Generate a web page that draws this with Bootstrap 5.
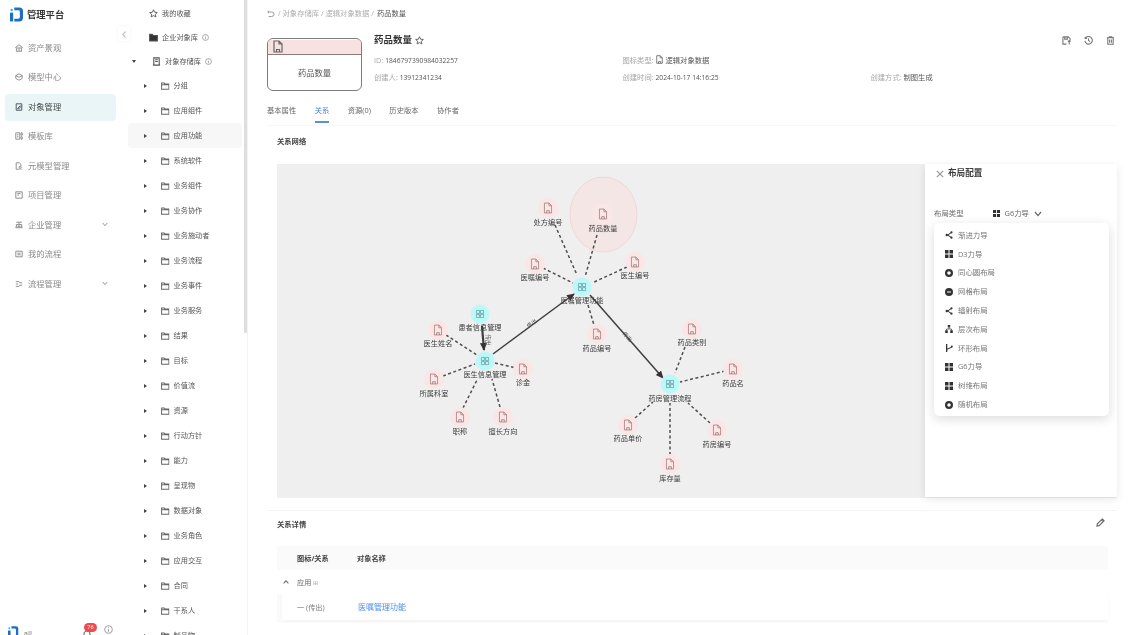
<!DOCTYPE html>
<html lang="zh-CN">
<head>
    <meta charset="UTF-8">
    <meta name="viewport" content="width=device-width, initial-scale=1.0">
    <link href="https://cdn.jsdelivr.net/npm/bootstrap@5.3.2/dist/css/bootstrap.min.css" rel="stylesheet">
    <title>管理平台</title>
    <style>
        html, body { height: 100%; overflow: hidden; }
        body { font-family: "Open Sans", "Noto Sans CJK SC", sans-serif; font-size: 7.3px; color: #555; background: #fff; }
        .shell { height: 635px; filter: blur(.45px); }
        .ico { fill: none; stroke: currentColor; stroke-width: 1.2; flex: none; }

        /* left menu */
        .side { width: 124px; flex: none; height: 635px; position: relative; }
        .brand { height: 30px; padding: 7px 0 0 10px; gap: 4px; font-size: 9.3px; font-weight: 700; color: #333; }
        .brand svg { width: 13px; height: 15px; }
        .brand span { line-height: 16px; }
        .side-nav { margin-top: 3px; padding: 0 8px 0 5px; }
        .side-link { height: 29.5px; padding: 0 5px 0 10px; gap: 5px; border-radius: 4px; font-size: 8.3px; color: #8a8a8a; white-space: nowrap; }
        .side-link svg.ico { width: 8px; height: 8px; color: #8c8c8c; }
        .side-link.on { color: #4a4a4a; background: #e9f5f6; height: 27px; margin: 1.5px 0 1px; }
        .side-link.on svg.ico { color: #4a5560; }
        .side-link svg.arr { margin-left: auto; width: 6px; height: 5px; margin-right: 3px; }
        .fold-btn { position: absolute; right: -6px; top: 27px; width: 12px; height: 14px; background: #fff; border-radius: 3px; color: #c4c4c4; box-shadow: 0 0 4px rgba(0,0,0,.05); }
        .side-foot { position: absolute; left: 8px; top: 623px; width: 105px; gap: 5px; color: #777; font-size: 8px; }
        .side-foot .logo2 { width: 16px; height: 18px; }
        .foot-name { margin-top: 5px; line-height: 10px; }
        .bell { margin-left: 46px; position: relative; width: 8px; height: 14px; margin-top: 7px; color: #777; }
        .bell svg { display: block; width: 8px; height: 9px; }
        .bell-badge { position: absolute; left: 1px; top: -7px; width: 13px; height: 9px; border-radius: 5px; background: #ef4a4f; color: #fff; font-size: 5.5px; line-height: 9px; text-align: center; }
        .side-foot .tip { width: 9px; height: 9px; color: #aaa; margin: 2px 0 0 8px; }

        /* object tree */
        .tree { width: 124px; flex: none; height: 635px; overflow: hidden; position: relative; padding-top: 1px; border-right: 1px solid #f3f3f3; font-size: 7.2px; }
        .tree-top { height: 24px; gap: 4px; white-space: nowrap; }
        .tree-row { height: 25px; padding-left: 16px; gap: 4px; border-radius: 4px; white-space: nowrap; margin-left: 4px; margin-right: 5px; }
        .tree-row.hover { background: #f7f7f7; }
        .tree-top svg.ico { width: 9px; height: 9px; color: #555; }
        .tree-row svg.ico { width: 8.5px; height: 8px; color: #666; }
        .caret-r { width: 0; height: 0; border-left: 3px solid #444; border-top: 2.2px solid transparent; border-bottom: 2.2px solid transparent; flex: none; margin-right: 10px; }
        .caret-d { width: 0; height: 0; border-top: 3px solid #444; border-left: 2.2px solid transparent; border-right: 2.2px solid transparent; flex: none; }
        .pad-top { padding-left: 25px; }
        .pad-store { padding-left: 8px; }
        .pad-store .caret-d { margin-right: 12px; }
        .tree-top svg.tip-ico { width: 7px; height: 7px; color: #999; }
        .scroll-thumb { position: absolute; right: 0; top: 0; width: 3.5px; height: 333px; background: #dedede; }

        /* main area */
        .main-area { min-width: 0; padding: 8px 12px 0 19px; }
        .crumb { height: 11px; line-height: 11px; gap: 3px; color: #adadad; white-space: nowrap; }
        .crumb b { font-weight: 400; color: #555; }
        .crumb svg { width: 8px; height: 8px; color: #999; }
        .head-row { margin-top: 19px; gap: 12px; }
        .obj-card { width: 95px; height: 53px; flex: none; border: 1px solid #7d7d7d; border-radius: 6px; overflow: hidden; }
        .obj-band { height: 15px; background: #f8e1e1; border-bottom: 1px solid #8a7c7c; padding-left: 5px; color: #666; }
        .obj-band svg { width: 10px; height: 13px; margin-top: 1px; }
        .obj-name { height: 36px; font-size: 8.3px; color: #555; }
        .head-info { margin-top: -5px; }
        .head-title { height: 14px; gap: 3px; font-size: 9.5px; font-weight: 700; color: #333; }
        .head-title svg { width: 9px; height: 9px; color: #555; }
        .head-tools { margin-left: auto; gap: 13px; margin-right: 2px; }
        .head-tools svg { width: 9px; height: 9px; color: #777; }
        .meta-grid { margin-top: 5px; display: grid; grid-template-columns: 248.5px 248px 1fr; line-height: 16px; white-space: nowrap; }
        .meta-grid i { font-style: normal; color: #a6a6a6; }
        .meta-grid span { color: #555; }
        .meta-grid span.num { font-size: 6.7px; }
        .meta-grid svg { width: 7px; height: 9px; vertical-align: -1px; color: #666; margin-right: 3px; }
        .tabs { margin-top: 9px; padding-bottom: 2px; gap: 18.5px; border-bottom: 1px solid #f7f7f7; }
        .tab-item { height: 23px; line-height: 21px; color: #666; border-bottom: 2px solid transparent; white-space: nowrap; }
        .tab-item.on { color: #4a86c5; border-bottom-color: #5c93c9; }
        .sec-title { margin: 9px 0 0 10px; height: 12px; line-height: 12px; font-weight: 700; color: #444; font-size: 7.3px; }
        .graph-box { margin: 17px 0 0 10px; height: 334px; background: #efefef; position: relative; }
        .graph-box > svg { display: block; width: 100%; height: 100%; }
        .g-lbl { font-size: 7.2px; fill: #3c3c3c; text-anchor: middle; font-family: "Noto Sans CJK SC", sans-serif; }
        .g-edge-lbl { font-size: 5.5px; fill: #555; text-anchor: middle; font-family: "Noto Sans CJK SC", sans-serif; }
        .g-dash { stroke: #4f4f4f; stroke-width: 1.5; stroke-dasharray: 3 2.5; fill: none; }
        .g-solid { stroke: #3f3f3f; stroke-width: 1.5; fill: none; }
        .g-thick { stroke-width: 2.2; }
        .g-halo { fill: #fbe6e6; }
        .g-hub { fill: #bdf8f8; }
        .g-doc { fill: none; stroke: #a07c7c; stroke-width: .9; }
        .g-four { fill: none; stroke: #5f9a9f; stroke-width: .8; }

        /* layout panel over the graph */
        .layout-panel { position: absolute; right: 0; top: 0; bottom: 1px; width: 192px; background: #fff; box-shadow: 0 2px 8px rgba(0,0,0,.1); padding: 4px 9px; }
        .panel-head { height: 11px; gap: 4px; margin-left: 2px; font-size: 8.6px; font-weight: 700; color: #3c3c3c; white-space: nowrap; }
        .panel-head svg { width: 8px; height: 8px; color: #999; }
        .panel-field { margin-top: 29px; height: 12px; color: #666; white-space: nowrap; font-size: 7.4px; }
        .panel-field .val { margin-left: 29px; gap: 5px; }
        .panel-field svg.sq { width: 7px; height: 7px; fill: #333; }
        .panel-field svg.chev { width: 8px; height: 6px; color: #666; }
        .layout-menu { position: absolute; left: 9px; top: 59px; width: 175px; height: 193px; background: #fff; border-radius: 5px; box-shadow: 0 3px 12px rgba(0,0,0,.14); padding: 3px 0 0 11px; }
        .layout-opt { height: 18.8px; gap: 5px; color: #777; white-space: nowrap; font-size: 7.4px; }
        .layout-opt svg { width: 8px; height: 8px; fill: #333; flex: none; }

        /* relation details */
        .detail-sep { margin-top: 12px; border-top: 1px solid #f5f5f5; padding: 7px 12px 0 10px; }
        .detail-sep .sec-title { margin: 0; }
        .detail-sep svg { width: 9px; height: 9px; color: #666; }
        .det-table { margin: 16px 9px 0 10px; font-size: 7.2px; }
        .det-head { height: 24px; background: #fafafa; border-radius: 4px 4px 0 0; font-weight: 700; color: #444; padding-left: 20px; }
        .det-c1 { width: 60px; flex: none; }
        .det-group { height: 24px; color: #666; padding-left: 6px; gap: 8px; }
        .det-group svg { width: 6px; height: 4px; color: #777; }
        .det-group em { font-style: normal; color: #aaa; font-size: 6px; }
        .det-wrap { background: #fafafa; padding: 0 0 3px 5px; }
        .det-row { height: 26px; background: #fff; padding-left: 15px; box-shadow: 0 1px 3px rgba(0,0,0,.03); color: #777; }
        .det-link { color: #4b8df0; font-size: 8px; text-decoration: none; margin-left: 1px; }
    </style>
</head>
<body>
    <svg width="0" height="0" class="position-absolute">
        <defs>
            <symbol id="doc" viewBox="0 0 10 13"><path d="M1 1h5l3 3v8H1zM6 1v3h3M3.5 12V9.5h3V12"/></symbol>
            <symbol id="folder" viewBox="0 0 10 9"><path d="M.7 1h3l1 1.3h4.6v6H.7zM.7 3h8.6"/></symbol>
            <symbol id="star" viewBox="0 0 12 12"><path d="M6 1l1.5 3.3 3.6.4-2.7 2.4.8 3.5L6 8.8l-3.2 1.8.8-3.5L.9 4.7l3.6-.4z"/></symbol>
            <symbol id="tip" viewBox="0 0 10 10"><circle cx="5" cy="5" r="4.2"/><path d="M5 4.5v3M5 2.5v1"/></symbol>
            <symbol id="four" viewBox="0 0 10 10"><path d="M1 1h3.4v3.4H1zM5.6 1H9v3.4H5.6zM1 5.6h3.4V9H1zM5.6 5.6H9V9H5.6z"/></symbol>
            <symbol id="sq" viewBox="0 0 8 8"><path d="M0 0h3.5v3.5H0zM4.5 0H8v3.5H4.5zM0 4.5h3.5V8H0zM4.500 4.500H8V8H4.500z"/></symbol>
            <symbol id="share" viewBox="0 0 8 8"><path d="M1.800 4L6.300 1l.5.8L3.400 4l3.400 2.200-.5.8z"/><circle cx="1.800" cy="4" r="1.200"/><circle cx="6.500" cy="1.300" r="1.100"/><circle cx="6.500" cy="6.700" r="1.100"/></symbol>
            <symbol id="ring" viewBox="0 0 8 8"><path fill-rule="evenodd" d="M4 0a4 4 0 110 8 4 4 0 010-8zm0 2.200a1.800 1.800 0 100 3.600 1.800 1.800 0 000-3.600z"/></symbol>
            <symbol id="disc" viewBox="0 0 8 8"><path fill-rule="evenodd" d="M4 0a4 4 0 110 8 4 4 0 010-8zM2 3.400v1.200h4V3.400z"/></symbol>
            <symbol id="tree3" viewBox="0 0 8 8"><path d="M2.800 0h2.400v2.600H2.800zM.2 5.200h2.600V8H.2zM5.200 5.200h2.600V8H5.200z"/><path d="M4 2.600v1.500M1.500 5.200V4h5v1.200" fill="none" stroke="#333" stroke-width=".7"/></symbol>
            <symbol id="branch" viewBox="0 0 8 8"><path d="M1 0h1.300v8H1zM1.500 5L7 2.500l.4.8-5.500 2.600z"/><circle cx="6.800" cy="2.400" r="1"/></symbol>
            <symbol id="chev" viewBox="0 0 8 6"><path d="M1 1l3 3.600L7 1"/></symbol>
            <symbol id="logo" viewBox="0 0 14 15">
                <circle cx="1.800" cy="2.600" r="1.300" fill="#2fb4e8"/>
                <path d="M0 5.500h3.400V15H0z" fill="#1c6fc4"/>
                <path d="M4.600 0H10a4 4 0 014 4v7a4 4 0 01-4 4H4.600v-3H9a1.600 1.600 0 001.600-1.600V4.600A1.600 1.600 0 009 3H4.600z" fill="#1c6fc4"/>
            </symbol>
        </defs>
    </svg>

    <div class="shell d-flex">
        <aside class="side">
            <div class="brand d-flex"><svg><use href="#logo"/></svg><span>管理平台</span></div>
            <nav class="side-nav">
                <div class="side-link d-flex align-items-center"><svg class="ico" viewBox="0 0 10 10"><path d="M1 4L5 1l4 3v1H1zM2 5.500v3M5 5.500v3M8 5.500v3M1 9h8"/></svg>资产景观</div>
                <div class="side-link d-flex align-items-center"><svg class="ico" viewBox="0 0 10 10"><path d="M5 1l4 2.200v3.600L5 9 1 6.800V3.200zM1 3.200l4 2.200 4-2.200"/></svg>模型中心</div>
                <div class="side-link on d-flex align-items-center"><svg class="ico" viewBox="0 0 10 10"><path d="M1.500 1h7v8h-7zM3.500 6.500l3-3 1 1-3 3h-1z"/></svg>对象管理</div>
                <div class="side-link d-flex align-items-center"><svg class="ico" viewBox="0 0 10 10"><path d="M1 1h5v8H1zM7.500 1H9v3H7.500zM7.500 6H9v3H7.500zM2.500 3.500h2M2.500 6h2"/></svg>模板库</div>
                <div class="side-link d-flex align-items-center"><svg class="ico" viewBox="0 0 10 10"><path d="M1.500 1h4l2 2v2M1.500 1v8h3"/><circle cx="6.500" cy="6.500" r="1.300"/><path d="M4.500 9.500c.3-1.300 3.700-1.300 4 0"/></svg>元模型管理</div>
                <div class="side-link d-flex align-items-center"><svg class="ico" viewBox="0 0 10 10"><path d="M1 1h8v8H1zM3 3h4M3 5h2"/></svg>项目管理</div>
                <div class="side-link d-flex align-items-center"><svg class="ico" viewBox="0 0 10 10"><path d="M1.500 1.500h7M5 1.500v3M1.500 5.500v-1h7v1M1 8.500l1-3 1 3zM4 8.500l1-3 1 3zM7 8.500l1-3 1 3z"/></svg>企业管理<svg class="arr ico" viewBox="0 0 8 6"><use href="#chev"/></svg></div>
                <div class="side-link d-flex align-items-center"><svg class="ico" viewBox="0 0 10 10"><path d="M1 1.500h8v7H1zM3 4h4M3 6h4"/></svg>我的流程</div>
                <div class="side-link d-flex align-items-center"><svg class="ico" viewBox="0 0 10 10"><path d="M1 2h4l1 1.500h3M1 5h3M1 8h4l1-1.500h3"/></svg>流程管理<svg class="arr ico" viewBox="0 0 8 6"><use href="#chev"/></svg></div>
            </nav>
            <div class="fold-btn d-flex align-items-center justify-content-center"><svg width="4" height="7" viewBox="0 0 4 7" class="ico"><path d="M3.500.5L.8 3.500l2.700 3"/></svg></div>
            <div class="side-foot d-flex align-items-start">
                <svg class="logo2"><use href="#logo"/></svg><span class="foot-name">all</span>
                <div class="bell"><svg class="ico" viewBox="0 0 8 9"><path d="M1 7V4a3 3 0 016 0v3zM.3 7h7.400"/></svg><div class="bell-badge">76</div></div>
                <svg class="tip ico"><use href="#tip"/></svg>
            </div>
        </aside>

        <div class="tree">
            <div class="tree-top pad-top d-flex align-items-center"><svg class="ico"><use href="#star"/></svg>我的收藏</div>
            <div class="tree-top pad-top d-flex align-items-center"><svg class="ico" viewBox="0 0 10 9"><path d="M.7 1h3l1 1.300h4.600v6H.7z" fill="#333"/></svg>企业对象库 <svg class="ico tip-ico"><use href="#tip"/></svg></div>
            <div class="tree-top pad-store d-flex align-items-center"><span class="caret-d"></span><svg class="ico" viewBox="0 0 10 10"><path d="M2 1h6v8H2zM3.500 3h3M3.500 5h3M1 9h8"/></svg>对象存储库 <svg class="ico tip-ico"><use href="#tip"/></svg></div>
            <div class="tree-row d-flex align-items-center"><span class="caret-r"></span><svg class="ico"><use href="#folder"/></svg>分组</div>
            <div class="tree-row d-flex align-items-center"><span class="caret-r"></span><svg class="ico"><use href="#folder"/></svg>应用组件</div>
            <div class="tree-row hover d-flex align-items-center"><span class="caret-r"></span><svg class="ico"><use href="#folder"/></svg>应用功能</div>
            <div class="tree-row d-flex align-items-center"><span class="caret-r"></span><svg class="ico"><use href="#folder"/></svg>系统软件</div>
            <div class="tree-row d-flex align-items-center"><span class="caret-r"></span><svg class="ico"><use href="#folder"/></svg>业务组件</div>
            <div class="tree-row d-flex align-items-center"><span class="caret-r"></span><svg class="ico"><use href="#folder"/></svg>业务协作</div>
            <div class="tree-row d-flex align-items-center"><span class="caret-r"></span><svg class="ico"><use href="#folder"/></svg>业务施动者</div>
            <div class="tree-row d-flex align-items-center"><span class="caret-r"></span><svg class="ico"><use href="#folder"/></svg>业务流程</div>
            <div class="tree-row d-flex align-items-center"><span class="caret-r"></span><svg class="ico"><use href="#folder"/></svg>业务事件</div>
            <div class="tree-row d-flex align-items-center"><span class="caret-r"></span><svg class="ico"><use href="#folder"/></svg>业务服务</div>
            <div class="tree-row d-flex align-items-center"><span class="caret-r"></span><svg class="ico"><use href="#folder"/></svg>结果</div>
            <div class="tree-row d-flex align-items-center"><span class="caret-r"></span><svg class="ico"><use href="#folder"/></svg>目标</div>
            <div class="tree-row d-flex align-items-center"><span class="caret-r"></span><svg class="ico"><use href="#folder"/></svg>价值流</div>
            <div class="tree-row d-flex align-items-center"><span class="caret-r"></span><svg class="ico"><use href="#folder"/></svg>资源</div>
            <div class="tree-row d-flex align-items-center"><span class="caret-r"></span><svg class="ico"><use href="#folder"/></svg>行动方针</div>
            <div class="tree-row d-flex align-items-center"><span class="caret-r"></span><svg class="ico"><use href="#folder"/></svg>能力</div>
            <div class="tree-row d-flex align-items-center"><span class="caret-r"></span><svg class="ico"><use href="#folder"/></svg>呈现物</div>
            <div class="tree-row d-flex align-items-center"><span class="caret-r"></span><svg class="ico"><use href="#folder"/></svg>数据对象</div>
            <div class="tree-row d-flex align-items-center"><span class="caret-r"></span><svg class="ico"><use href="#folder"/></svg>业务角色</div>
            <div class="tree-row d-flex align-items-center"><span class="caret-r"></span><svg class="ico"><use href="#folder"/></svg>应用交互</div>
            <div class="tree-row d-flex align-items-center"><span class="caret-r"></span><svg class="ico"><use href="#folder"/></svg>合同</div>
            <div class="tree-row d-flex align-items-center"><span class="caret-r"></span><svg class="ico"><use href="#folder"/></svg>干系人</div>
            <div class="tree-row d-flex align-items-center"><span class="caret-r"></span><svg class="ico"><use href="#folder"/></svg>制品物</div>
            <div class="scroll-thumb"></div>
        </div>

        <main class="main-area flex-grow-1">
            <div class="crumb d-flex align-items-center">
                <svg class="ico" viewBox="0 0 10 10"><path d="M2.500 1L1 2.500 2.500 4M1 2.500h5a2.800 2.800 0 010 5.600H2"/></svg>
                <span>/ 对象存储库 / 逻辑对象数据 /</span><b>药品数量</b>
            </div>

            <div class="head-row d-flex">
                <div class="obj-card">
                    <div class="obj-band"><svg class="ico d-block"><use href="#doc"/></svg></div>
                    <div class="obj-name d-flex align-items-center justify-content-center">药品数量</div>
                </div>
                <div class="head-info flex-grow-1">
                    <div class="head-title d-flex align-items-center">药品数量 <svg class="ico"><use href="#star"/></svg>
                        <div class="head-tools d-flex">
                            <svg class="ico" viewBox="0 0 10 10"><path d="M1 1h6l2 2v2M1 1v8h4M3 1v2.500h3V1M6.500 6h3M8 4.500v5"/></svg>
                            <svg class="ico" viewBox="0 0 10 10"><path d="M1.500 2.500A4.200 4.200 0 11.900 5.500M1.300 .8v2h2M5 2.800V5l1.800 1.300"/></svg>
                            <svg class="ico" viewBox="0 0 10 10"><path d="M1 2h8M3.500 2V.8h3V2M2 2v7.200h6V2M4 4v3.500M6 4v3.500"/></svg>
                        </div>
                    </div>
                    <div class="meta-grid">
                        <div><i>ID:</i> <span class="num">1846797390984032257</span></div>
                        <div><i>图标类型:</i> <svg class="ico"><use href="#doc"/></svg><span>逻辑对象数据</span></div>
                        <div></div>
                        <div><i>创建人:</i> <span class="num">13912341234</span></div>
                        <div><i>创建时间:</i> <span class="num">2024-10-17 14:16:25</span></div>
                        <div><i>创建方式:</i> <span>制图生成</span></div>
                    </div>
                </div>
            </div>

            <div class="tabs d-flex">
                <div class="tab-item">基本属性</div>
                <div class="tab-item on">关系</div>
                <div class="tab-item">资源(0)</div>
                <div class="tab-item">历史版本</div>
                <div class="tab-item">协作者</div>
            </div>

            <div class="sec-title">关系网络</div>

            <div class="graph-box">
                <svg viewBox="277 164 840 334">
                    <defs>
                        <marker id="arw" viewBox="0 0 8 8" refX="7" refY="4" markerWidth="8" markerHeight="8" markerUnits="userSpaceOnUse" orient="auto"><path d="M0 .5L8 4 0 7.500z" fill="#333"/></marker>
                        <g id="nd"><circle r="10" class="g-halo"/><use href="#doc" x="-4.500" y="-6" width="9" height="12" class="g-doc"/></g>
                        <g id="hb"><circle r="9.500" class="g-hub"/><use href="#four" x="-4.500" y="-4.500" width="9" height="9" class="g-four"/></g>
                    </defs>
                    <ellipse cx="603.500" cy="214.500" rx="33.500" ry="37.500" fill="#f5e6e6" stroke="#f0d2d2" stroke-width=".8"/>

                    <path class="g-dash" d="M555 225L577 275M597 235L585 277M543 268L573 283M627 267L592 283M588 305L594 325"/>
                    <path class="g-dash" d="M446 335L477 355M495 363L516 368M443 376L475 364M463 408L477 380M500 407L492 379"/>
                    <path class="g-dash" d="M685 347L675 373M725 371L680 382M635 418L653 402M710 423L688 403M670 455V403"/>
                    <path class="g-solid" marker-end="url(#arw)" d="M493 354L574 294"/>
                    <path class="g-solid" marker-end="url(#arw)" d="M590 295L663 378"/>
                    <path class="g-solid g-thick" marker-end="url(#arw)" d="M482 326L484 350"/>
                    <text class="g-edge-lbl" transform="translate(533 325) rotate(-37)">传出</text>
                    <text class="g-edge-lbl" transform="translate(626 338) rotate(48)">传出</text>
                    <text class="g-edge-lbl" transform="translate(486 340) rotate(90)">传出</text>

                    <use href="#nd" x="548" y="208"/><text class="g-lbl" x="548" y="225">处方编号</text>
                    <use href="#nd" x="603" y="214"/><text class="g-lbl" x="603" y="231">药品数量</text>
                    <use href="#nd" x="535" y="264"/><text class="g-lbl" x="535" y="280">医嘱编号</text>
                    <use href="#nd" x="635" y="262"/><text class="g-lbl" x="635" y="278">医生编号</text>
                    <use href="#hb" x="582" y="287"/><text class="g-lbl" x="582" y="303">医嘱管理功能</text>
                    <use href="#nd" x="597" y="334"/><text class="g-lbl" x="597" y="351">药品编号</text>
                    <use href="#hb" x="480" y="314"/><text class="g-lbl" x="480" y="330">患者信息管理</text>
                    <use href="#nd" x="438" y="330"/><text class="g-lbl" x="438" y="346">医生姓名</text>
                    <use href="#hb" x="485" y="361"/><text class="g-lbl" x="485" y="377">医生信息管理</text>
                    <use href="#nd" x="523" y="369"/><text class="g-lbl" x="523" y="385">诊金</text>
                    <use href="#nd" x="434" y="379"/><text class="g-lbl" x="434" y="396">所属科室</text>
                    <use href="#nd" x="460" y="417"/><text class="g-lbl" x="460" y="434">职称</text>
                    <use href="#nd" x="503" y="417"/><text class="g-lbl" x="503" y="434">擅长方向</text>
                    <use href="#nd" x="692" y="329"/><text class="g-lbl" x="692" y="345">药品类别</text>
                    <use href="#nd" x="733" y="369"/><text class="g-lbl" x="733" y="386">药品名</text>
                    <use href="#hb" x="670" y="384"/><text class="g-lbl" x="670" y="401">药房管理流程</text>
                    <use href="#nd" x="628" y="425"/><text class="g-lbl" x="628" y="441">药品单价</text>
                    <use href="#nd" x="717" y="430"/><text class="g-lbl" x="717" y="447">药房编号</text>
                    <use href="#nd" x="670" y="464"/><text class="g-lbl" x="670" y="481">库存量</text>
                </svg>

                <div class="layout-panel">
                    <div class="panel-head d-flex align-items-center"><svg class="ico" viewBox="0 0 8 8"><path d="M.8.800l6.400 6.400M7.200.800L.8 7.200"/></svg>布局配置</div>
                    <div class="panel-field d-flex align-items-center">布局类型
                        <div class="val d-flex align-items-center"><svg class="sq"><use href="#sq"/></svg>G6力导<svg class="chev ico"><use href="#chev"/></svg></div>
                    </div>
                    <div class="layout-menu">
                        <div class="layout-opt d-flex align-items-center"><svg><use href="#share"/></svg>渐进力导</div>
                        <div class="layout-opt d-flex align-items-center"><svg><use href="#sq"/></svg>D3力导</div>
                        <div class="layout-opt d-flex align-items-center"><svg><use href="#ring"/></svg>同心圆布局</div>
                        <div class="layout-opt d-flex align-items-center"><svg><use href="#disc"/></svg>网格布局</div>
                        <div class="layout-opt d-flex align-items-center"><svg><use href="#share"/></svg>辐射布局</div>
                        <div class="layout-opt d-flex align-items-center"><svg><use href="#tree3"/></svg>层次布局</div>
                        <div class="layout-opt d-flex align-items-center"><svg><use href="#branch"/></svg>环形布局</div>
                        <div class="layout-opt d-flex align-items-center"><svg><use href="#sq"/></svg>G6力导</div>
                        <div class="layout-opt d-flex align-items-center"><svg><use href="#sq"/></svg>树维布局</div>
                        <div class="layout-opt d-flex align-items-center"><svg><use href="#ring"/></svg>随机布局</div>
                    </div>
                </div>
            </div>

            <div class="detail-sep d-flex justify-content-between">
                <div class="sec-title">关系详情</div>
                <svg class="ico" viewBox="0 0 10 10"><path d="M7 1l2 2-5.500 5.500L1 9l.5-2.500zM6 2l2 2"/></svg>
            </div>

            <div class="det-table">
                <div class="det-head d-flex align-items-center"><div class="det-c1">图标/关系</div><div>对象名称</div></div>
                <div class="det-group d-flex align-items-center"><svg class="ico" viewBox="0 0 6 4"><path d="M.6 3.400L3 .8l2.400 2.600"/></svg><span>应用 <em>⊞</em></span></div>
                <div class="det-wrap">
                    <div class="det-row d-flex align-items-center"><div class="det-c1">一 (传出)</div><a class="det-link" href="#">医嘱管理功能</a></div>
                </div>
            </div>
        </main>
    </div>
    <script src="https://cdn.jsdelivr.net/npm/bootstrap@5.3.2/dist/js/bootstrap.bundle.min.js"></script>
</body>
</html>
